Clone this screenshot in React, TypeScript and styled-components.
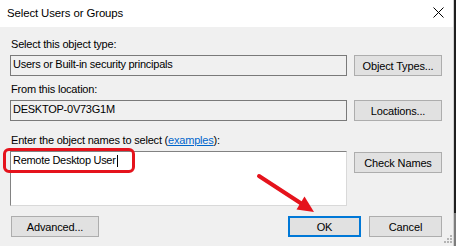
import React from 'react';
import styled, { createGlobalStyle } from 'styled-components';

const GlobalStyle = createGlobalStyle`
  html, body {
    margin: 0;
    padding: 0;
    background: #1e1e1e;
  }
  * {
    box-sizing: border-box;
  }
`;

const Page = styled.div`
  display: flex;
  width: 456px;
  height: 246px;
  overflow: hidden;
`;

const Backdrop = styled.div`
  flex: 1;
  background: linear-gradient(#1f1f1f 0, #1f1f1f 213px, #7d7d7d 213px);
`;

const Window = styled.div`
  position: relative;
  width: 454px;
  height: 246px;
  display: flex;
  flex-direction: column;
  background: #f0f0f0;
  border-right: 1px solid #d0d0d0;
  font-family: "Liberation Sans", Arial, sans-serif;
  font-size: 11px;
  color: #000;
`;

const TitleBar = styled.div`
  height: 27px;
  flex: none;
  display: flex;
  align-items: center;
  justify-content: space-between;
  padding: 0 9px 2px 7px;
  background: #fff;
`;

const Title = styled.span`
  font-size: 11.4px;
  letter-spacing: -0.1px;
  color: #000;
`;

const Body = styled.div`
  display: flex;
  flex-direction: column;
  padding: 11px 11px 0 10px;
`;

const Section = styled.div<{ $gap: number }>`
  display: flex;
  flex-direction: column;
  margin-top: ${({ $gap }) => $gap}px;
`;

const Label = styled.div`
  height: 13px;
  line-height: 13px;
  margin: 0 0 4px 1px;
  letter-spacing: -0.2px;
  white-space: nowrap;
`;

const Link = styled.span`
  color: #0066cc;
  text-decoration: underline;
`;

const Row = styled.div`
  display: flex;
  gap: 7px;
  align-items: flex-start;
`;

const Field = styled.div`
  width: 337px;
  height: 21px;
  padding: 2px 3px 0 2px;
  line-height: 13px;
  border: 1px solid #7a7a7a;
  background: #f0f0f0;
  letter-spacing: -0.25px;
  white-space: nowrap;
`;

const MultiField = styled.div`
  width: 337px;
  height: 55px;
  padding: 2px 3px 0 2px;
  line-height: 13px;
  background: #fff;
  border: 1px solid #d9d9d9;
  border-top-color: #828282;
  border-left-color: #828282;
  letter-spacing: -0.3px;
  display: flex;
  align-items: flex-start;
  white-space: nowrap;
`;

const Caret = styled.span`
  display: inline-block;
  width: 1px;
  height: 12px;
  margin: 1px 0 0 1px;
  background: #000;
`;

const Button = styled.div<{ $w?: number; $focus?: boolean; $offset?: number }>`
  width: ${({ $w }) => $w ?? 88}px;
  height: 21px;
  margin-top: ${({ $offset }) => $offset ?? 0}px;
  display: flex;
  align-items: center;
  justify-content: center;
  background: #e1e1e1;
  border: ${({ $focus }) => ($focus ? '2px solid #0078d7' : '1px solid #adadad')};
  letter-spacing: -0.15px;
  white-space: nowrap;
`;

const Footer = styled.div`
  display: flex;
  align-items: center;
  margin-top: 10px;
  padding-left: 1px;
  gap: 8px;
`;

const Spacer = styled.div`
  flex: 1;
`;

const Highlight = styled.div`
  position: absolute;
  left: 3px;
  top: 148px;
  width: 132px;
  height: 25px;
  border: 3px solid #e5131c;
  border-radius: 6px;
  pointer-events: none;
`;

const Overlay = styled.svg`
  position: absolute;
  left: 0;
  top: 0;
  pointer-events: none;
`;

const CloseIcon = () => (
  <svg width="11" height="11" viewBox="0 0 11 11">
    <path d="M0.5 0.5 L10.5 10.5 M10.5 0.5 L0.5 10.5" stroke="#000" strokeWidth="1" />
  </svg>
);

const gripDots = [
  [9, 1],
  [6, 4],
  [9, 4],
  [3, 7],
  [6, 7],
  [9, 7],
];

export default function App() {
  return (
    <>
      <GlobalStyle />
      <Page>
        <Window>
          <TitleBar>
            <Title>Select Users or Groups</Title>
            <CloseIcon />
          </TitleBar>
          <Body>
            <Section $gap={0}>
              <Label>Select this object type:</Label>
              <Row>
                <Field>Users or Built-in security principals</Field>
                <Button>Object Types...</Button>
              </Row>
            </Section>
            <Section $gap={7}>
              <Label>From this location:</Label>
              <Row>
                <Field>DESKTOP-0V73G1M</Field>
                <Button>Locations...</Button>
              </Row>
            </Section>
            <Section $gap={13}>
              <Label>
                Enter the object names to select (<Link>examples</Link>):
              </Label>
              <Row>
                <MultiField>
                  <span>Remote Desktop User</span>
                  <Caret />
                </MultiField>
                <Button $offset={1}>Check Names</Button>
              </Row>
            </Section>
            <Footer>
              <Button>Advanced...</Button>
              <Spacer />
              <Button $w={73} $focus>OK</Button>
              <Button $w={73}>Cancel</Button>
            </Footer>
          </Body>

          <Highlight />
          <Overlay width="454" height="246" viewBox="0 0 454 246">
            <line x1="259" y1="176" x2="302" y2="204" stroke="#e5131c" strokeWidth="4" strokeLinecap="round" />
            <polygon points="314,212 296.5,209.5 304.5,196.5" fill="#e5131c" />
            {gripDots.map(([x, y]) => (
              <rect key={`${x}-${y}`} x={441 + x} y={234 + y} width="2" height="2" fill="#b4b4b4" />
            ))}
          </Overlay>
        </Window>
        <Backdrop />
      </Page>
    </>
  );
}
